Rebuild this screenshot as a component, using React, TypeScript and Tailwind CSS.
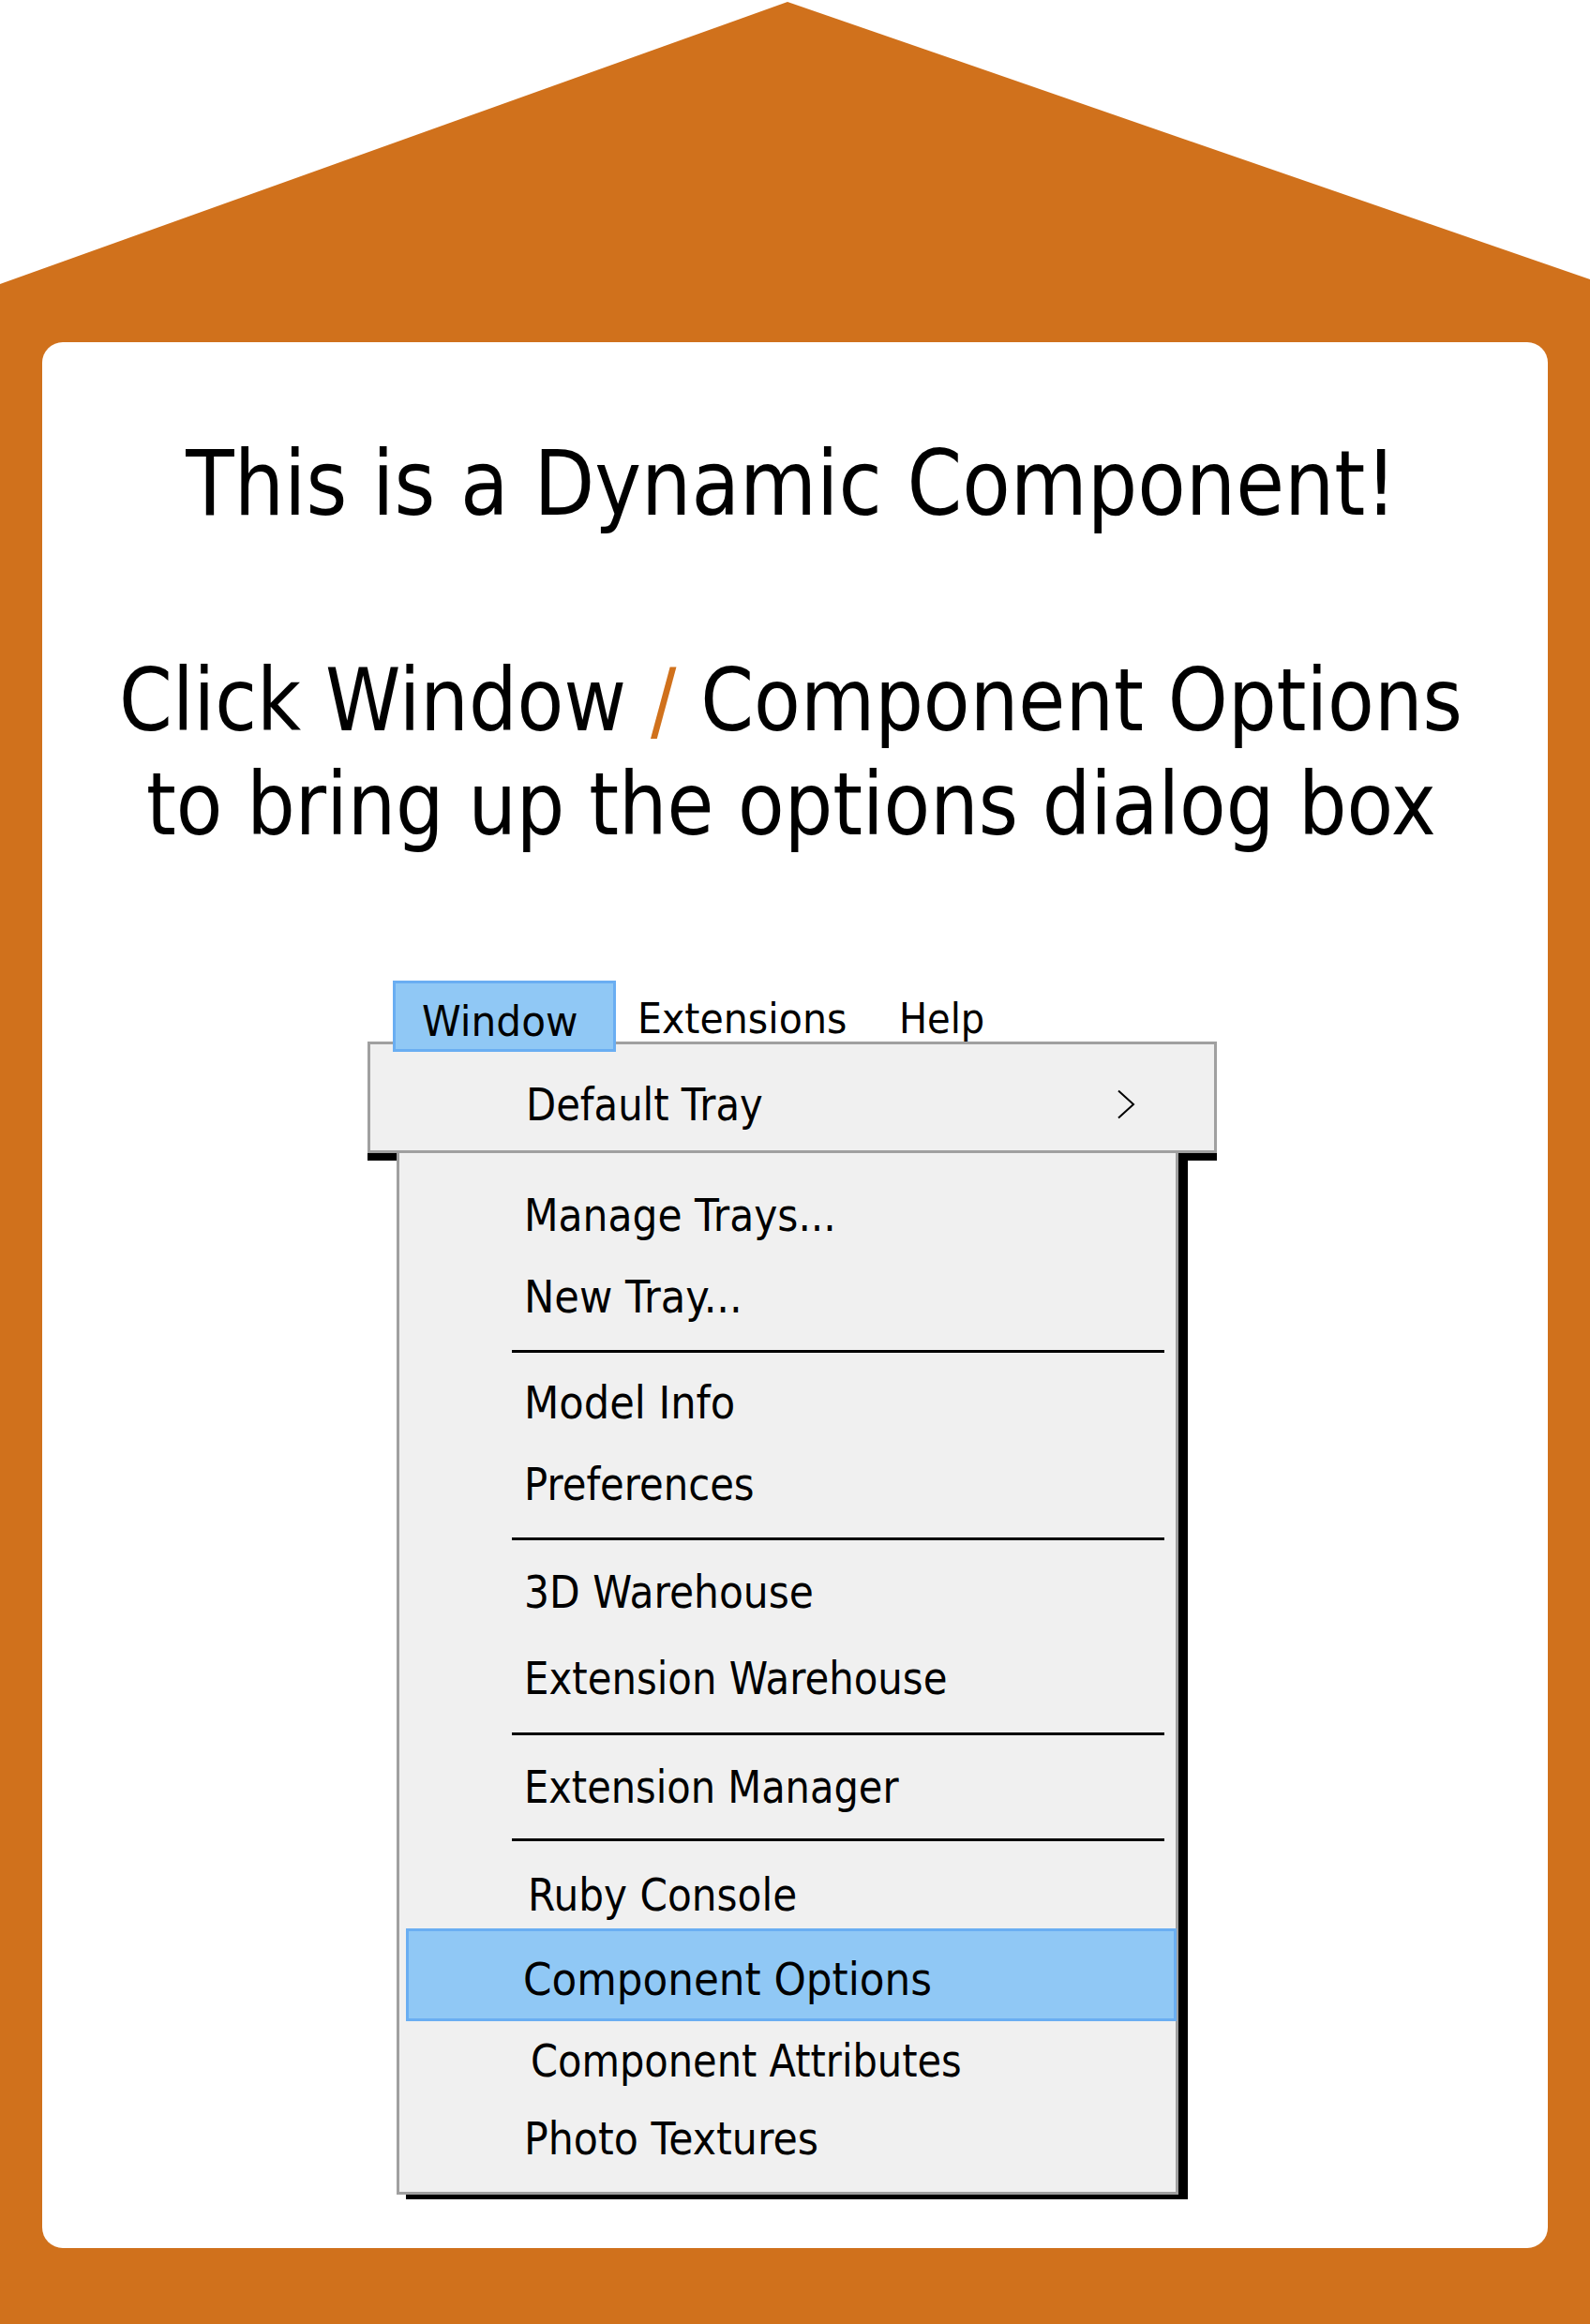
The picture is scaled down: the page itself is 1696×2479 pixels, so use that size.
import React from 'react';

type Row =
  | { kind: 'item'; label: string; cls: string; sx: string }
  | { kind: 'sep'; cls: string }
  | { kind: 'active'; label: string; cls: string; sx: string };

const rows: Row[] = [
  { kind: 'item', label: 'Manage Trays...', cls: 'mt-[42px] pl-[133px]', sx: 'scale-x-[0.884]' },
  { kind: 'item', label: 'New Tray...', cls: 'mt-[39px] pl-[133px]', sx: 'scale-x-[0.9]' },
  { kind: 'sep', cls: 'mt-[33px]' },
  { kind: 'item', label: 'Model Info', cls: 'mt-[29px] pl-[133px]', sx: 'scale-x-[0.9]' },
  { kind: 'item', label: 'Preferences', cls: 'mt-[39px] pl-[133px]', sx: 'scale-x-[0.87]' },
  { kind: 'sep', cls: 'mt-[33px]' },
  { kind: 'item', label: '3D Warehouse', cls: 'mt-[31px] pl-[133px]', sx: 'scale-x-[0.884]' },
  { kind: 'item', label: 'Extension Warehouse', cls: 'mt-[44px] pl-[133px]', sx: 'scale-x-[0.872]' },
  { kind: 'sep', cls: 'mt-[34px]' },
  { kind: 'item', label: 'Extension Manager', cls: 'mt-[31px] pl-[133px]', sx: 'scale-x-[0.866]' },
  { kind: 'sep', cls: 'mt-[31px]' },
  { kind: 'item', label: 'Ruby Console', cls: 'mt-[33px] pl-[137px]', sx: 'scale-x-[0.88]' },
  { kind: 'active', label: 'Component Options', cls: 'mt-[12px]', sx: 'scale-x-[0.91]' },
  { kind: 'item', label: 'Component Attributes', cls: 'mt-[18px] pl-[140px]', sx: 'scale-x-[0.866]' },
  { kind: 'item', label: 'Photo Textures', cls: 'mt-[35px] pl-[133px]', sx: 'scale-x-[0.89]' },
];

function MenuText({ label, sx }: { label: string; sx: string }) {
  return (
    <span className={`inline-block origin-left whitespace-nowrap text-[48px] leading-[48px] text-black ${sx}`}>
      {label}
    </span>
  );
}

function Menu() {
  return (
    <div className="ml-[347px] mt-[132px] w-[906px] flex flex-col">
      {/* menu bar */}
      <div className="flex h-[76px]">
        <div className="relative z-10 ml-[27px] w-[238px] h-[76px] border-[3px] border-[#6aaef2] bg-[#90c8f5] pt-[19px] pl-[28px]">
          <span className="inline-block origin-left whitespace-nowrap text-[44px] leading-[44px] scale-x-[0.96]">Window</span>
        </div>
        <div className="ml-[23px] w-[279px] pt-[19px]">
          <span className="inline-block origin-left whitespace-nowrap text-[44px] leading-[44px] scale-x-[0.935]">Extensions</span>
        </div>
        <div className="pt-[19px]">
          <span className="inline-block origin-left whitespace-nowrap text-[44px] leading-[44px] scale-x-[0.91]">Help</span>
        </div>
      </div>

      {/* Default Tray bar */}
      <div className="-mt-[11px] w-[906px] h-[119px] border-[3px] border-[#a0a0a0] bg-[#f0f0f0] flex items-start shadow-[0_8px_0_0_#000]">
        <div className="pt-[40px] pl-[166px]">
          <MenuText label="Default Tray" sx="scale-x-[0.87]" />
        </div>
        <svg className="ml-auto mr-[84px] mt-[48px]" width="20" height="32" viewBox="0 0 20 32" fill="none">
          <path d="M2 1.5 L18 16 L2 30.5" stroke="#000" strokeWidth="2" />
        </svg>
      </div>

      {/* dropdown */}
      <div className="ml-[31px] w-[834px] border-x-[3px] border-b-[3px] border-[#a0a0a0] bg-[#f0f0f0] shadow-[10px_5px_0_0_#000] pb-[33px] flex flex-col">
        {rows.map((r, i) => {
          if (r.kind === 'sep') {
            return <div key={i} className={`h-[3px] w-[696px] ml-[120px] bg-black ${r.cls}`} />;
          }
          if (r.kind === 'active') {
            return (
              <div key={i} className={`ml-[7px] w-[822px] h-[99px] border-[3px] border-[#6aaef2] bg-[#90c8f5] pt-[27px] pl-[122px] ${r.cls}`}>
                <MenuText label={r.label} sx={r.sx} />
              </div>
            );
          }
          return (
            <div key={i} className={`h-[48px] ${r.cls}`}>
              <MenuText label={r.label} sx={r.sx} />
            </div>
          );
        })}
      </div>
    </div>
  );
}

export default function App() {
  return (
    <div className="w-[1696px] h-[2479px] bg-white flex flex-col font-['DejaVu_Sans',sans-serif] text-black">
      {/* roof */}
      <svg className="block shrink-0" width="1696" height="303" viewBox="0 0 1696 303">
        <polygon points="0,303 840,2 1696,298 1696,303" fill="#d0711c" />
      </svg>

      <div className="flex-1 flex flex-col bg-[#d0711c] px-[45px] pt-[62px] pb-[81px]">
        <div className="flex-1 bg-white rounded-[22px] flex flex-col items-center">
          <div className="mt-[102px] mr-[8px] h-[97px] flex justify-center">
            <span className="inline-block whitespace-nowrap text-[97px] leading-[97px] scale-x-[0.868]">
              This is a Dynamic Component!
            </span>
          </div>
          <div className="mt-[128px] mr-[8px] flex flex-col items-center">
            <span className="inline-block whitespace-nowrap text-[92px] leading-[111px] scale-x-[0.885]">
              Click Window <span className="text-[#d0711c]">/</span> Component Options
            </span>
            <span className="inline-block whitespace-nowrap text-[92px] leading-[111px] scale-x-[0.882]">
              to bring up the options dialog box
            </span>
          </div>
          <div className="self-stretch">
            <Menu />
          </div>
        </div>
      </div>
    </div>
  );
}
